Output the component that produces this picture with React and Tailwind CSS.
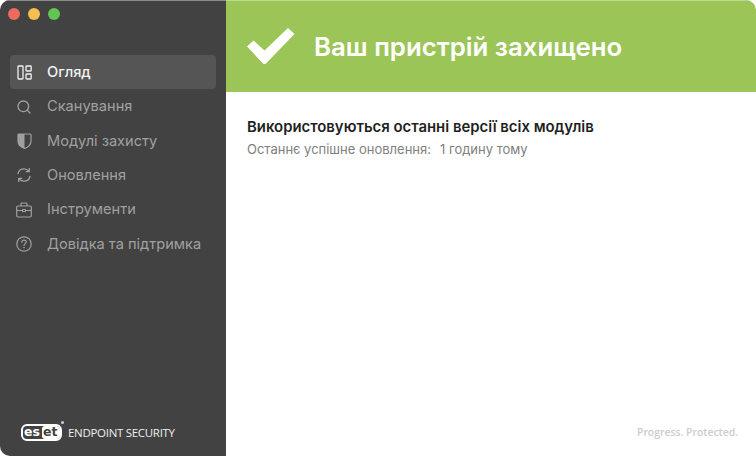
import { LuSearch } from "react-icons/lu";

const LayoutIcon = () => (
  <svg width="15" height="15" viewBox="0 0 15 15" fill="none" stroke="currentColor" strokeWidth="1.3">
    <rect x="1" y="1" width="5" height="13" rx="0.8" />
    <rect x="9" y="1" width="5.2" height="5" rx="0.8" />
    <rect x="9" y="9" width="5.2" height="5" rx="0.8" />
  </svg>
)

const ShieldIcon = () => (
  <svg width="15" height="16" viewBox="0 0 15 16" fill="none">
    <path d="M2 1 H13 Q14 1 14 2 V8 C14 11.500 11.500 14 7.500 15.500 C3.500 14 1 11.500 1 8 V2 Q1 1 2 1 Z" stroke="currentColor" strokeWidth="1.2" />
    <path d="M2 1 H7.500 V15.500 C3.500 14 1 11.500 1 8 V2 Q1 1 2 1 Z" fill="currentColor" />
  </svg>
)

const RefreshIcon = () => (
  <svg width="16" height="16" viewBox="0 0 16 16" fill="none" stroke="currentColor" strokeWidth="1.3" strokeLinecap="round" strokeLinejoin="round">
    <path d="M2 6.500 C2.700 3.700 5.100 1.800 8 1.800 C10 1.800 11.700 2.700 12.800 4.200" />
    <path d="M14 9.500 C13.300 12.300 10.900 14.200 8 14.200 C6 14.200 4.300 13.300 3.200 11.800" />
    <path d="M13.300 1.500 V4.700 H10.300" />
    <path d="M2.700 14.500 V11.300 H5.700" />
  </svg>
)

const BriefcaseIcon = () => (
  <svg width="16" height="16" viewBox="0 0 16 16" fill="none" stroke="currentColor" strokeWidth="1.2">
    <rect x="0.700" y="4" width="14.600" height="11" rx="1.200" />
    <path d="M5 4 V2 Q5 1 6 1 H10 Q11 1 11 2 V4" />
    <path d="M0.700 8.500 H6.500 M9.500 8.500 H15.300" />
    <rect x="6.500" y="7.500" width="3" height="2" rx="0.300" />
  </svg>
)

const HelpIcon = () => (
  <svg width="16" height="16" viewBox="0 0 16 16" fill="none" stroke="currentColor" strokeWidth="1.2">
    <circle cx="8" cy="8" r="7.200" />
    <path d="M5.800 6.200 C5.800 4.900 6.800 4.200 8 4.200 C9.300 4.200 10.200 5 10.200 6.100 C10.200 7.600 8 7.700 8 9.500" strokeLinecap="round" />
    <circle cx="8" cy="11.600" r="0.800" fill="currentColor" stroke="none" />
  </svg>
)

const NAV = [
  { label: "Огляд", icon: <LayoutIcon />, active: true },
  { label: "Сканування", icon: <LuSearch size={16} /> },
  { label: "Модулі захисту", icon: <ShieldIcon /> },
  { label: "Оновлення", icon: <RefreshIcon /> },
  { label: "Інструменти", icon: <BriefcaseIcon /> },
  { label: "Довідка та підтримка", icon: <HelpIcon /> },
]

const Logo = () => (
  <div className="flex items-center gap-[6px]">
    <div className="relative h-[17px] w-[41px]">
      <div className="flex h-full w-full overflow-hidden rounded-[6px] border-2 border-white font-['DejaVu_Sans',sans-serif] text-[12.500px] font-bold leading-[12px]">
        <span className="w-[19px] pl-[1px] text-white">es</span>
        <span className="flex-1 rounded-l-[3px] bg-white pl-[1px] text-[#424242]">et</span>
      </div>
      <span className="absolute right-[-2px] top-[-3px] h-[3px] w-[3px] rounded-full bg-[#cccccc]" />
    </div>
    <span className="text-[11.500px] tracking-[-0.3px] text-[#eeeeee] font-['Open_Sans',sans-serif]">ENDPOINT SECURITY</span>
  </div>
)

const App = () => {
  return (
    <div className="h-[456px] w-[756px] overflow-hidden bg-white font-['Inter',sans-serif]">
      <div className="flex h-full overflow-hidden rounded-[10px]">
        <div className="flex w-[226px] flex-col border-t border-[#8a8a8a] bg-[#424242] px-[10px]">
          <div className="flex h-[54px] gap-[8px] pt-[7px]">
            <span className="ml-[-2px] h-[12px] w-[12px] rounded-full bg-[#ed6a5e]" />
            <span className="h-[12px] w-[12px] rounded-full bg-[#f5bf4f]" />
            <span className="h-[12px] w-[12px] rounded-full bg-[#61c554]" />
          </div>
          <div className="flex flex-col">
            {NAV.map((item) => (
              <div
                key={item.label}
                className={item.active
                  ? "flex h-[34.400px] items-center rounded-[4px] bg-[#555555] font-medium text-[#f2f2f2]"
                  : "flex h-[34.400px] items-center rounded-[4px] text-[#a0a0a0]"}
              >
                <span className="flex w-[37px] justify-center pr-[9px]">{item.icon}</span>
                <span className="text-[14.600px] leading-none">{item.label}</span>
              </div>
            ))}
          </div>
          <div className="mt-auto pb-[15px] pl-[11px]">
            <Logo />
          </div>
        </div>
        <div className="flex flex-1 flex-col">
          <div className="flex h-[92px] items-center border-t border-[#bcd892] bg-[#9cc558] pl-[21px] text-white">
            <svg width="48" height="37" viewBox="0 0 48 37" fill="white">
              <path d="M0 18.500 L6.500 12.500 L17.500 22.500 L41 0 L47.500 6 L18.500 36 L16.500 36 Z" />
            </svg>
            <h1 className="ml-[19px] text-[25.800px] font-semibold leading-none">Ваш пристрій захищено</h1>
          </div>
          <div className="flex flex-1 flex-col px-[21px] pt-[26px]">
            <h2 className="text-[14.900px] font-semibold leading-[18px] text-[#1f1f1f]">Використовуються останні версії всіх модулів</h2>
            <div className="mt-[5px] flex text-[13px] leading-[16px] text-[#808080]">
              <span>Останнє успішне оновлення:</span>
              <span className="ml-[9px]">1 годину тому</span>
            </div>
            <div className="mr-[-3px] mt-auto self-end pb-[15px] font-['Open_Sans',sans-serif] text-[10.400px] font-semibold text-[#cccccc]">Progress. Protected.</div>
          </div>
        </div>
      </div>
    </div>
  )
}

export default App
